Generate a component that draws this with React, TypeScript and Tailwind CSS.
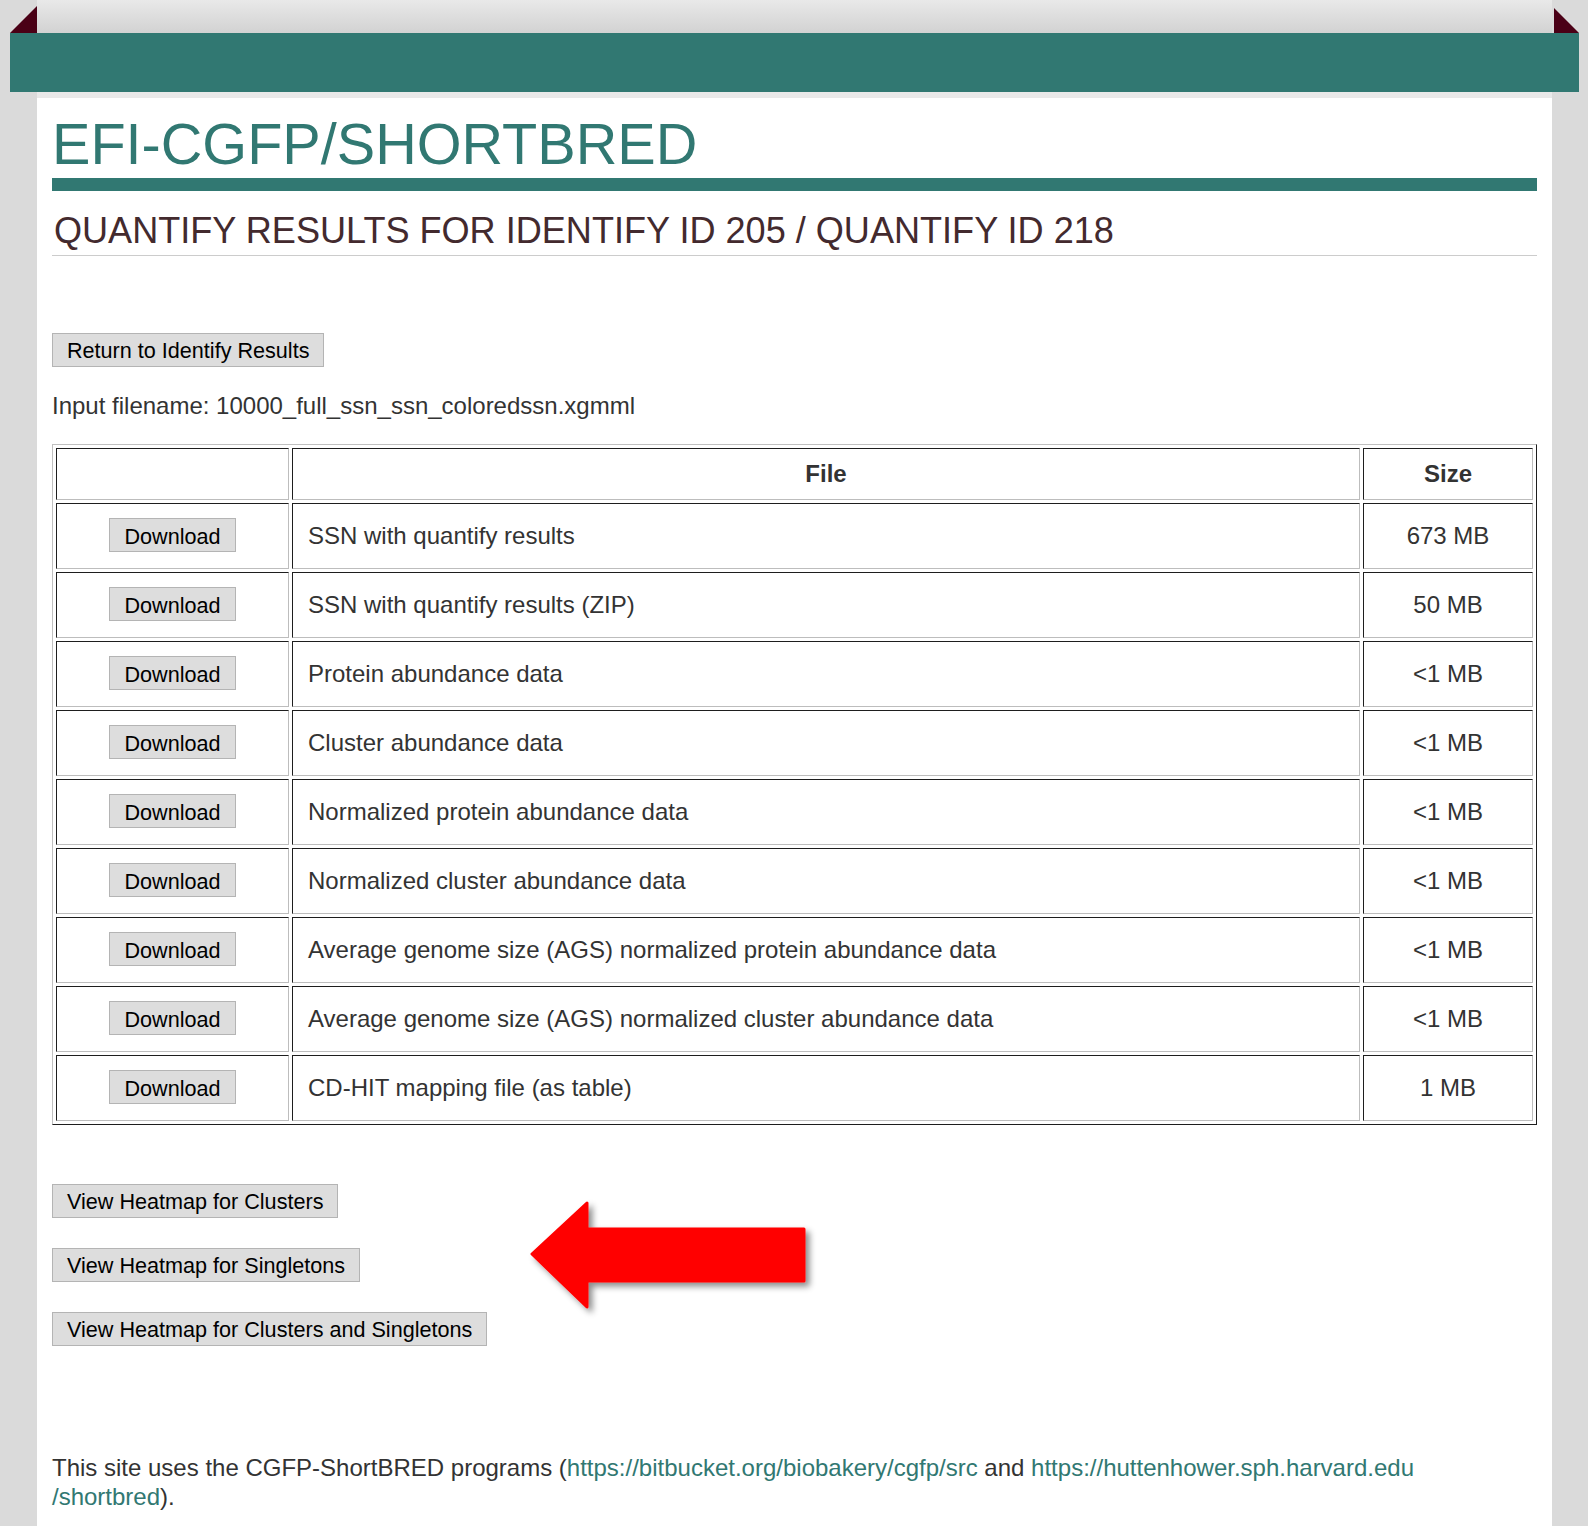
import React from "react"

const rows = [
  { name: "SSN with quantify results", size: "673 MB" },
  { name: "SSN with quantify results (ZIP)", size: "50 MB" },
  { name: "Protein abundance data", size: "<1 MB" },
  { name: "Cluster abundance data", size: "<1 MB" },
  { name: "Normalized protein abundance data", size: "<1 MB" },
  { name: "Normalized cluster abundance data", size: "<1 MB" },
  { name: "Average genome size (AGS) normalized protein abundance data", size: "<1 MB" },
  { name: "Average genome size (AGS) normalized cluster abundance data", size: "<1 MB" },
  { name: "CD-HIT mapping file (as table)", size: "1 MB" },
]

function Btn({ children }: { children: React.ReactNode }) {
  return (
    <button className="inline-flex h-[34px] items-center border border-[#b4b4b4] bg-[#dddddd] px-[14px] pt-[2px] text-[21.6px] leading-none text-black">
      {children}
    </button>
  )
}

const cell =
  "border border-t-[#1e1e1e] border-l-[#1e1e1e] border-b-[#bdbdbd] border-r-[#bdbdbd]"

export default function App() {
  return (
    <div
      className="flex min-h-screen flex-col bg-[#dadada] text-[#333333]"
      style={{ fontFamily: '"Liberation Sans", Arial, sans-serif' }}
    >
      {/* top ribbon */}
      <div className="ml-[10px] flex items-end">
        <svg width="27" height="27" viewBox="0 0 27 27" className="block">
          <polygon points="0,27 27,0 27,27" fill="#4a0016" />
        </svg>
        <div className="h-[33px] w-[1515px] bg-gradient-to-b from-[#e9e9e9] to-[#d2d2d2]" />
        <div className="w-[2px]" />
        <svg width="25" height="25" viewBox="0 0 25 25" className="block">
          <polygon points="0,0 0,25 25,25" fill="#4a0016" />
        </svg>
      </div>
      <div className="ml-[10px] h-[59px] w-[1569px] bg-[#317872]" />

      <div className="ml-[37px] flex w-[1515px] flex-1 flex-col bg-white">
        <div className="h-[6px] bg-[#e9e9e9]" />
        <div className="px-[15px] pb-[20px]">
          <h1 className="mt-[18px] border-b-[13px] border-[#317872] pb-[4px] text-[57.6px] leading-none font-normal text-[#317872]">
            EFI-CGFP/SHORTBRED
          </h1>
          <h2 className="mt-[22px] border-b border-[#cccccc] pb-[6px] pl-[2px] text-[36.1px] leading-none font-normal text-[#432a2e]">
            QUANTIFY RESULTS FOR IDENTIFY ID 205 / QUANTIFY ID 218
          </h2>

          <div className="mt-[77px]">
            <Btn>Return to Identify Results</Btn>
          </div>

          <p className="mt-[27px] text-[24px] leading-none">
            Input filename: 10000_full_ssn_ssn_coloredssn.xgmml
          </p>

          <table className="mt-[26px] w-full table-fixed border-separate border-spacing-[3px] border border-t-[#c0c0c0] border-l-[#c0c0c0] border-b-[#1e1e1e] border-r-[#1e1e1e] text-[24px]">
            <thead>
              <tr>
                <th className={`${cell} h-[52px] w-[233px]`} />
                <th className={`${cell} h-[52px] text-center font-bold`}>File</th>
                <th className={`${cell} h-[52px] w-[170px] text-center font-bold`}>Size</th>
              </tr>
            </thead>
            <tbody>
              {rows.map((r) => (
                <tr key={r.name}>
                  <td className={`${cell} h-[66px] text-center align-middle`}>
                    <Btn>Download</Btn>
                  </td>
                  <td className={`${cell} h-[66px] pl-[15px] align-middle`}>{r.name}</td>
                  <td className={`${cell} h-[66px] text-center align-middle`}>{r.size}</td>
                </tr>
              ))}
            </tbody>
          </table>

          <div className="relative mt-[59px] flex flex-col items-start gap-[30px]">
            <Btn>View Heatmap for Clusters</Btn>
            <Btn>View Heatmap for Singletons</Btn>
            <Btn>View Heatmap for Clusters and Singletons</Btn>

            {/* red callout arrow */}
            <svg
              width="310"
              height="130"
              viewBox="0 0 310 130"
              className="pointer-events-none absolute left-[468px] top-[6px]"
            >
              <defs>
                <filter id="sh" x="-10%" y="-20%" width="130%" height="150%">
                  <feDropShadow dx="4" dy="4" stdDeviation="3" floodColor="#000" floodOpacity="0.45" />
                </filter>
              </defs>
              <polygon
                points="12,64 67,13 67,39 284,39 284,91 67,91 67,117"
                fill="#ff0000"
                stroke="#ff0000"
                strokeWidth="3"
                strokeLinejoin="round"
                filter="url(#sh)"
              />
            </svg>
          </div>

          <p className="mt-[107px] text-[24px] leading-[29.33px]">
            This site uses the CGFP-ShortBRED programs (
            <a className="text-[#317872]">https://bitbucket.org/biobakery/cgfp/src</a> and{" "}
            <a className="text-[#317872]">
              https://huttenhower.sph.harvard.edu
              <br />
              /shortbred
            </a>
            ).
          </p>
        </div>
      </div>
    </div>
  )
}
